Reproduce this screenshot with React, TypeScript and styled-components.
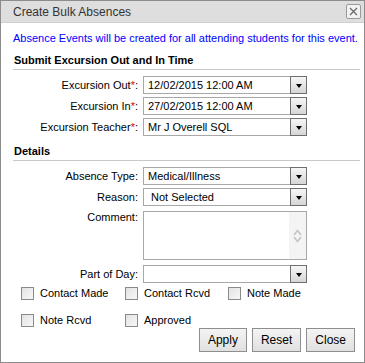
import React from 'react';
import styled, { createGlobalStyle } from 'styled-components';

const GlobalStyle = createGlobalStyle`
  html, body {
    margin: 0;
    padding: 0;
    background: #ffffff;
  }
  body {
    font-family: "Liberation Sans", Arial, sans-serif;
    font-size: 11px;
    color: #000;
  }
`;

const topFields = [
  { label: 'Excursion Out', value: '12/02/2015 12:00 AM', required: true },
  { label: 'Excursion In', value: '27/02/2015 12:00 AM', required: true },
  { label: 'Excursion Teacher', value: 'Mr J Overell SQL', required: true },
];

const checkRows = [
  ['Contact Made', 'Contact Rcvd', 'Note Made'],
  ['Note Rcvd', 'Approved'],
];

const DropDown: React.FC<{ value?: string; indent?: boolean }> = ({ value, indent }) => (
  <Select>
    <SelectText indent={indent}>{value}</SelectText>
    <ArrowButton>
      <Triangle />
    </ArrowButton>
  </Select>
);

const App: React.FC = () => {
  return (
    <>
      <GlobalStyle />
      <Dialog>
        <TitleBar>
          <Title>Create Bulk Absences</Title>
          <CloseButton aria-label="close">
            <svg width="9" height="9" viewBox="0 0 9 9">
              <path d="M1 1 L8 8 M8 1 L1 8" stroke="#6a6a6a" strokeWidth="1.3" fill="none" />
            </svg>
          </CloseButton>
        </TitleBar>

        <Body>
          <Notice>Absence Events will be created for all attending students for this event.</Notice>

          <SectionHeading>Submit Excursion Out and In Time</SectionHeading>
          <FormGrid>
            {topFields.map((f) => (
              <React.Fragment key={f.label}>
                <Label>
                  {f.label}
                  {f.required && <Req>*</Req>}:
                </Label>
                <DropDown value={f.value} />
              </React.Fragment>
            ))}
          </FormGrid>

          <SectionHeading>Details</SectionHeading>
          <FormGrid>
            <Label>Absence Type:</Label>
            <DropDown value="Medical/Illness" />
            <Label>Reason:</Label>
            <DropDown value="Not Selected" indent />
            <Label top>Comment:</Label>
            <TextArea>
              <TextSpace />
              <ScrollTrack>
                <svg width="9" height="14" viewBox="0 0 9 14">
                  <path d="M1 6 L4.5 1.5 L8 6 M1 8 L4.5 12.5 L8 8" stroke="#c4c4c4" strokeWidth="1.6" fill="none" />
                </svg>
              </ScrollTrack>
            </TextArea>
            <Label>Part of Day:</Label>
            <DropDown value="" />
          </FormGrid>

          <Checks>
            {checkRows.map((row, i) => (
              <CheckRow key={i}>
                {row.map((c) => (
                  <CheckItem key={c}>
                    <Box />
                    <span>{c}</span>
                  </CheckItem>
                ))}
              </CheckRow>
            ))}
          </Checks>

          <Actions>
            <Button>Apply</Button>
            <Button>Reset</Button>
            <Button>Close</Button>
          </Actions>
        </Body>
      </Dialog>
    </>
  );
};

export default App;

const Dialog = styled.div`
  box-sizing: border-box;
  width: 365px;
  height: 363px;
  border: 1px solid #8c8c8c;
  background: #ffffff;
  display: flex;
  flex-direction: column;
  overflow: hidden;
`;

const TitleBar = styled.div`
  height: 21px;
  flex: none;
  background: #dedede;
  border-bottom: 1px solid #cfcfcf;
  display: flex;
  align-items: center;
  justify-content: space-between;
  padding: 0 3px 0 12px;
`;

const Title = styled.span`
  font-size: 12px;
  color: #333333;
`;

const CloseButton = styled.div`
  box-sizing: border-box;
  width: 15px;
  height: 15px;
  border: 1px solid #9a9a9a;
  border-radius: 2px;
  background: #f2f2f2;
  display: flex;
  align-items: center;
  justify-content: center;
`;

const Body = styled.div`
  padding: 8px 4px 0 12px;
  display: flex;
  flex-direction: column;
`;

const Notice = styled.div`
  color: #0000ff;
  line-height: 14px;
  white-space: nowrap;
`;

const SectionHeading = styled.div`
  font-weight: bold;
  line-height: 13px;
  padding: 9px 0 2px 1px;
  border-bottom: 1px solid #c8c8c8;
  margin-bottom: 6px;
`;

const FormGrid = styled.div`
  display: grid;
  grid-template-columns: 125px 164px;
  column-gap: 5px;
  row-gap: 3px;
  align-items: center;
`;

const Label = styled.div<{ top?: boolean }>`
  text-align: right;
  white-space: nowrap;
  align-self: ${(p) => (p.top ? 'start' : 'center')};
  padding-top: ${(p) => (p.top ? '2px' : '0')};
`;

const Req = styled.span`
  color: #e00000;
`;

const Select = styled.div`
  box-sizing: border-box;
  height: 18px;
  display: flex;
  border: 1px solid #a8a8a8;
  border-right: none;
  background: #fff;
`;

const SelectText = styled.div<{ indent?: boolean }>`
  flex: 1;
  padding-left: ${(p) => (p.indent ? '7px' : '4px')};
  line-height: 16px;
  white-space: nowrap;
  overflow: hidden;
`;

const ArrowButton = styled.div`
  box-sizing: border-box;
  width: 17px;
  height: 18px;
  margin-top: -1px;
  border: 1px solid #6e6e6e;
  background: linear-gradient(#f6f6f6, #d6d6d6);
  display: flex;
  align-items: center;
  justify-content: center;
`;

const Triangle = styled.div`
  width: 0;
  height: 0;
  margin-top: 2px;
  border-left: 3.5px solid transparent;
  border-right: 3.5px solid transparent;
  border-top: 4px solid #000;
`;

const TextArea = styled.div`
  box-sizing: border-box;
  height: 49px;
  display: flex;
  border: 1px solid #a8a8a8;
  margin: 2px 0 2px;
`;

const TextSpace = styled.div`
  flex: 1;
`;

const ScrollTrack = styled.div`
  width: 17px;
  background: #f4f4f4;
  display: flex;
  align-items: center;
  justify-content: center;
`;

const Checks = styled.div`
  display: flex;
  flex-direction: column;
  gap: 13px;
  padding: 3px 0 0 8px;
`;

const CheckRow = styled.div`
  display: grid;
  grid-template-columns: 104px 103px 104px;
`;

const CheckItem = styled.label`
  display: flex;
  align-items: center;
  gap: 6px;
  line-height: 14px;
`;

const Box = styled.span`
  box-sizing: border-box;
  width: 13px;
  height: 13px;
  border: 1px solid #8a8a8a;
  background: linear-gradient(135deg, #e2e2e2, #f8f8f8);
`;

const Actions = styled.div`
  display: flex;
  justify-content: flex-end;
  gap: 5px;
  padding-right: 5px;
  margin-top: 1px;
`;

const Button = styled.div`
  box-sizing: border-box;
  height: 24px;
  padding: 0 8px;
  border: 1px solid #8e8e8e;
  background: linear-gradient(#f4f4f4, #e0e0e0);
  font-size: 12px;
  line-height: 22px;
  text-align: center;
`;
